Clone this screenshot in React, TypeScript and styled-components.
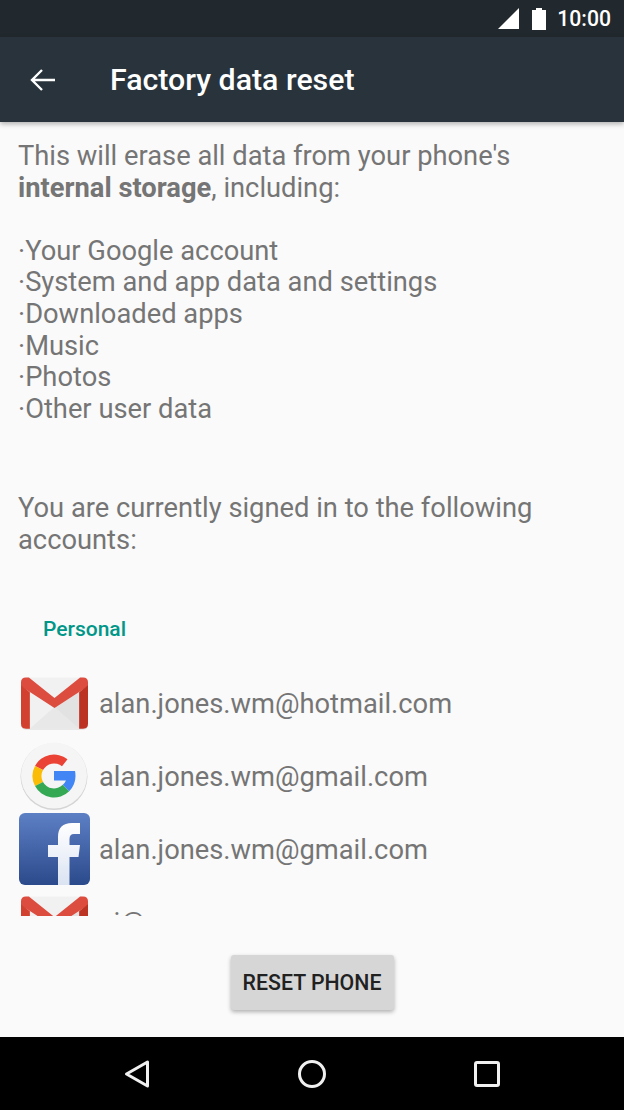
import React from "react";
import styled, { createGlobalStyle } from "styled-components";

const GlobalStyle = createGlobalStyle`
	html, body {
		margin: 0;
		padding: 0;
		background: #fafafa;
	}
	body {
		font-family: Roboto, "Liberation Sans", sans-serif;
	}
`;

const accounts = [
	{ icon: "gmail", email: "alan.jones.wm@hotmail.com" },
	{ icon: "google", email: "alan.jones.wm@gmail.com" },
	{ icon: "facebook", email: "alan.jones.wm@gmail.com" },
	{ icon: "gmail", email: "aj@" },
];

const erased = [
	"Your Google account",
	"System and app data and settings",
	"Downloaded apps",
	"Music",
	"Photos",
	"Other user data",
];

const GmailIcon = () => (
	<svg width="67" height="53" viewBox="0 0 68 53">
		<rect y="1" width="68" height="52" rx="5" fill="#d8d8d8" />
		<rect width="68" height="52" rx="5" fill="#f1f1f1" />
		<path d="M9 52 L34 30 L59 52 Z" fill="#e8e8e8" />
		<path d="M34 30 L59 15 L59 52 Z" fill="#e2e2e2" />
		<path d="M0 5 Q0 0 5 0 L8 0 L34 21 L60 0 L63 0 Q68 0 68 5 L68 9 L34 31 L0 9 Z" fill="#dc4d40" />
		<path d="M0 8 L9 15 L9 52 L5 52 Q0 52 0 47 Z" fill="#d2402f" />
		<path d="M68 8 L59 15 L59 52 L63 52 Q68 52 68 47 Z" fill="#bd3323" />
	</svg>
);

const GoogleIcon = () => (
	<svg width="68" height="68" viewBox="0 0 68 68">
		<circle cx="34" cy="34.500" r="33.500" fill="#d4d4d4" />
		<circle cx="34" cy="33.500" r="33" fill="#f5f5f5" />
		<path d="M47.500 17.300 A21.500 21.500 0 0 0 15 24 L23 28.100 A12.500 12.500 0 0 1 42 24.300 Z" fill="#ea4335" />
		<path d="M15 24 A21.500 21.500 0 0 0 15 44 L23 39.900 A12.500 12.500 0 0 1 23 28.100 Z" fill="#fbbc05" />
		<path d="M15 44 A21.500 21.500 0 0 0 49.200 49.200 L42.800 42.800 A12.500 12.500 0 0 1 23 39.900 Z" fill="#34a853" />
		<path d="M34 29 L55 29 Q55.500 31 55.500 34 A21.500 21.500 0 0 1 49.200 49.200 L42.800 42.800 A12.500 12.500 0 0 0 46 38.500 L34 38.500 Z" fill="#4285f4" />
	</svg>
);

const FacebookIcon = () => (
	<svg width="71" height="72" viewBox="0 0 71 72">
		<defs>
			<linearGradient id="fbBlue" x1="0" y1="0" x2="0" y2="1">
				<stop offset="0" stopColor="#5d7fc4" />
				<stop offset="1" stopColor="#2b4a8c" />
			</linearGradient>
			<linearGradient id="fbWhite" x1="0" y1="0" x2="0" y2="1">
				<stop offset="0" stopColor="#ffffff" />
				<stop offset="1" stopColor="#dbe3f2" />
			</linearGradient>
		</defs>
		<rect width="71" height="72" rx="6" fill="url(#fbBlue)" />
		<path d="M39 72 L39 44 L29 44 L29 32 L39 32 L39 24 Q39 10 53 10 L61 10 L61 21 L55 21 Q50.500 21 50.500 26 L50.500 32 L61 32 L59.500 44 L50.500 44 L50.500 72 Z" fill="url(#fbWhite)" />
	</svg>
);

const icons: Record<string, React.ReactNode> = {
	gmail: <GmailIcon />,
	google: <GoogleIcon />,
	facebook: <FacebookIcon />,
};

const App = () => {
	return (
		<Screen>
			<GlobalStyle />
			<StatusBar>
				<SignalIcon width="21" height="21" viewBox="0 0 21 21">
					<path d="M21 0 L21 21 L0 21 Z" fill="#fff" />
				</SignalIcon>
				<svg width="14" height="22" viewBox="0 0 14 22">
					<path d="M4 0 L10 0 L10 2 L14 2 L14 22 L0 22 L0 2 L4 2 Z" fill="#fff" />
				</svg>
				<Clock>10:00</Clock>
			</StatusBar>
			<Toolbar>
				<svg width="26" height="24" viewBox="0 0 26 24">
					<path d="M25 12 L2.500 12 M12 2 L2 12 L12 22" fill="none" stroke="#fff" strokeWidth="2.400" />
				</svg>
				<Title>Factory data reset</Title>
			</Toolbar>
			<Content>
				<Paragraph>
					This will erase all data from your phone's
					<br />
					<strong>internal storage</strong>, including:
				</Paragraph>
				<BulletList>
					{erased.map((item) => (
						<Bullet key={item}>·{item}</Bullet>
					))}
				</BulletList>
				<SignedIn>You are currently signed in to the following accounts:</SignedIn>
				<SectionLabel>Personal</SectionLabel>
				<AccountList>
					{accounts.map((account, index) => (
						<AccountRow key={index}>
							<IconSlot>{icons[account.icon]}</IconSlot>
							<Email>{account.email}</Email>
						</AccountRow>
					))}
				</AccountList>
			</Content>
			<Footer>
				<ResetButton>RESET PHONE</ResetButton>
			</Footer>
			<NavBar>
				<svg width="28" height="30" viewBox="0 0 28 30">
					<path d="M24.500 3 L24.500 27 L3.500 15 Z" fill="none" stroke="#f0f0f0" strokeWidth="3" strokeLinejoin="round" />
				</svg>
				<svg width="30" height="30" viewBox="0 0 30 30">
					<circle cx="15" cy="15" r="12.500" fill="none" stroke="#f0f0f0" strokeWidth="3" />
				</svg>
				<svg width="26" height="26" viewBox="0 0 26 26">
					<rect x="1.500" y="1.500" width="23" height="23" rx="1.500" fill="none" stroke="#f0f0f0" strokeWidth="3" />
				</svg>
			</NavBar>
		</Screen>
	);
};

const Screen = styled.div`
	display: flex;
	flex-direction: column;
	width: 624px;
	height: 1110px;
	overflow: hidden;
	background: #fafafa;
`;
const StatusBar = styled.div`
	display: flex;
	justify-content: flex-end;
	align-items: center;
	gap: 11px;
	flex: 0 0 37px;
	padding-right: 13px;
	box-sizing: border-box;
	background: #22292e;
`;
const SignalIcon = styled.svg`
	margin-right: 2px;
`;
const Clock = styled.span`
	color: #fff;
	font-size: 21.2px;
	font-weight: 500;
`;
const Toolbar = styled.div`
	display: flex;
	align-items: center;
	gap: 54px;
	flex: 0 0 85px;
	padding-left: 30px;
	box-sizing: border-box;
	background: #29333b;
	box-shadow: 0 2px 5px rgba(0, 0, 0, 0.3);
	position: relative;
	z-index: 1;
`;
const Title = styled.h1`
	margin: 0;
	color: #fff;
	font-size: 30.3px;
	font-weight: 500;
`;
const Content = styled.div`
	flex: 0 0 794px;
	overflow: hidden;
	padding: 19px 18px 0;
	box-sizing: border-box;
	color: #757575;
	font-size: 27.3px;
	line-height: 31.6px;
`;
const Paragraph = styled.p`
	margin: 0 0 31.6px;
	strong {
		font-weight: 700;
	}
`;
const BulletList = styled.div`
	margin-bottom: 68px;
`;
const Bullet = styled.div`
	white-space: nowrap;
`;
const SignedIn = styled.p`
	margin: 0;
	width: 560px;
`;
const SectionLabel = styled.div`
	margin: 59px 0 25px 25px;
	color: #009688;
	font-size: 21px;
	font-weight: 500;
	line-height: 26px;
`;
const AccountList = styled.div`
	display: flex;
	flex-direction: column;
`;
const AccountRow = styled.div`
	display: flex;
	align-items: center;
	gap: 9px;
	height: 73px;
`;
const IconSlot = styled.div`
	display: flex;
	justify-content: center;
	align-items: center;
	width: 72px;
`;
const Email = styled.span`
	padding-top: 4px;
	white-space: nowrap;
`;
const Footer = styled.div`
	display: flex;
	justify-content: center;
	align-items: center;
	flex: 1;
	padding-top: 11px;
`;
const ResetButton = styled.button`
	width: 163px;
	height: 55px;
	border: 0;
	border-radius: 3px;
	background: #d6d6d6;
	box-shadow: 0 2px 4px rgba(0, 0, 0, 0.3);
	color: #212121;
	font-family: inherit;
	font-size: 21.3px;
	font-weight: 500;
`;
const NavBar = styled.div`
	display: grid;
	grid-template-columns: repeat(3, 175px);
	justify-content: center;
	justify-items: center;
	align-items: center;
	flex: 0 0 73px;
	background: #000;
`;

export default App;
